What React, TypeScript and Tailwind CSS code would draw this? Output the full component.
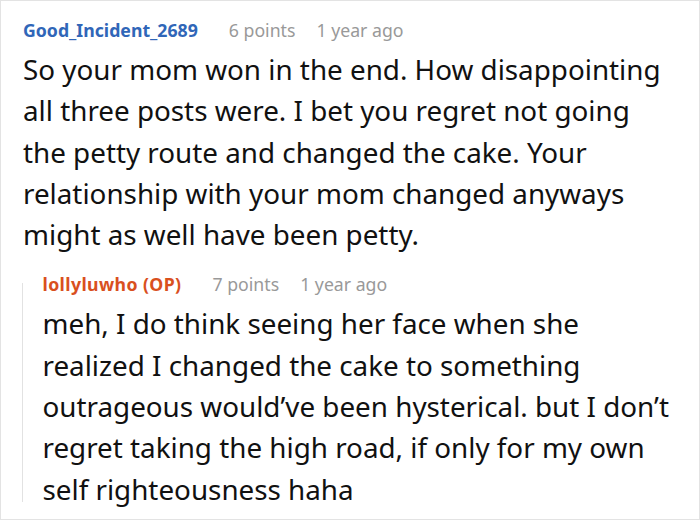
import React from 'react';

const font = { fontFamily: '"Noto Sans", "Open Sans", sans-serif' };

function Meta({ name, nameClass, points, age }: { name: string; nameClass: string; points: string; age: string }) {
  return (
    <div className="flex items-center text-[17.7px] leading-6">
      <span className={`font-bold ${nameClass}`}>{name}</span>
      <span className="ml-[31px] text-[#999999]">{points}</span>
      <span className="ml-[21px] text-[#999999]">{age}</span>
    </div>
  );
}

export default function App() {
  return (
    <div style={font} className="w-[700px] h-[520px] bg-white border border-[#e3e3e3] overflow-hidden">
      <div className="pl-[22px] pr-[32px] pt-[17px]">
        <Meta name="Good_Incident_2689" nameClass="text-[#3066b8]" points="6 points" age="1 year ago" />
        <p className="mt-[7px] text-[27.8px] leading-[41.3px] text-[#111111]">
          So your mom won in the end. How disappointing all three posts were. I bet you regret not going the petty route and changed the cake. Your relationship with your mom changed anyways might as well have been petty.
        </p>
      </div>
      <div className="flex mt-[17px]">
        <div className="ml-[21px] mt-[11px] mb-[8px] w-[2px] bg-[#e2e2e2]" />
        <div className="pl-[20px] pr-[14px]">
          <Meta name="lollyluwho (OP)" nameClass="text-[#d9501e] tracking-[0.4px]" points="7 points" age="1 year ago" />
          <p className="mt-[7px] text-[27.8px] leading-[41.3px] text-[#111111]">
            meh, I do think seeing her face when she realized I changed the cake to something outrageous would’ve been hysterical. but I don’t regret taking the high road, if only for my own self righteousness haha
          </p>
        </div>
      </div>
    </div>
  );
}
